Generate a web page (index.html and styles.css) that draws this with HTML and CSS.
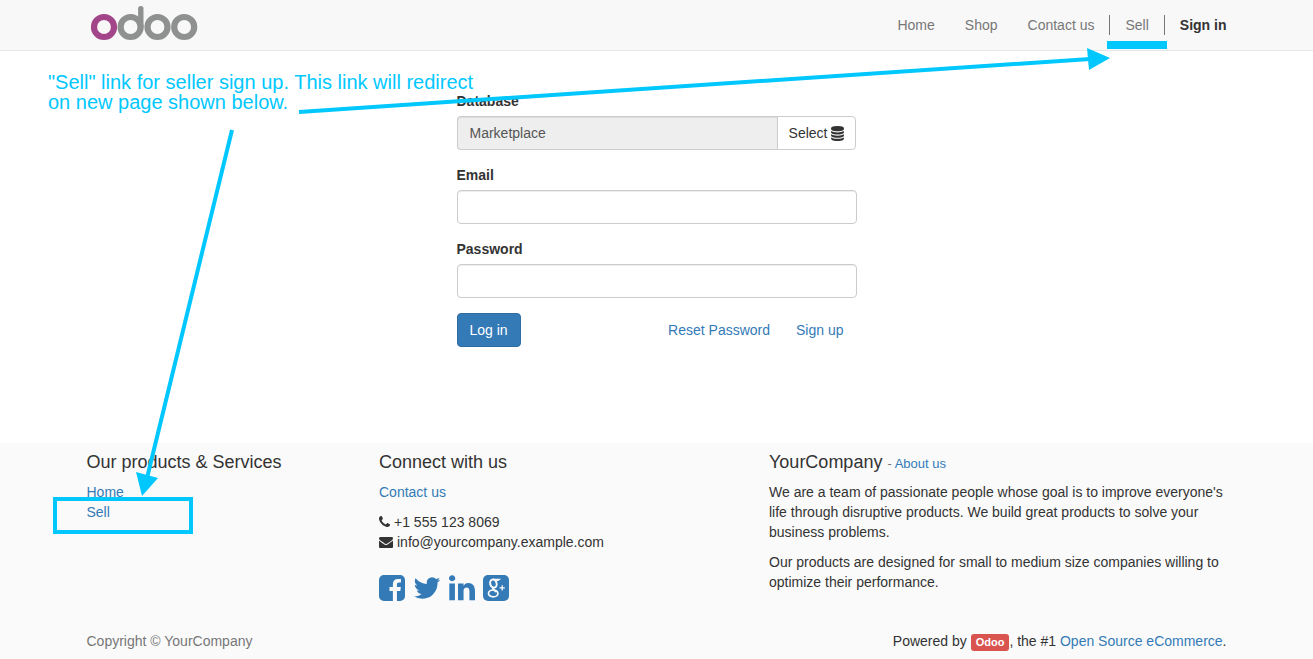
FILE: index.html
```html
<!DOCTYPE html>
<html lang="en">
<head>
<meta charset="utf-8">
<title>Sign in</title>
<link rel="stylesheet" href="styles.css">
</head>
<body>
<header class="navbar">
  <div class="container navbar-inner">
    <a class="brand" href="#" aria-label="odoo">
      <svg class="brand-logo" viewBox="87 0 115 50" fill="none" stroke="#8f9190" stroke-width="6.200">
        <circle cx="130.600" cy="27" r="10"/>
        <path d="M140.800 27V8.600" stroke-linecap="round" stroke-width="5.400"/>
        <circle cx="157.500" cy="27" r="10"/>
        <circle cx="184.200" cy="27" r="10"/>
        <circle cx="104" cy="27" r="10" stroke="#a24689"/>
      </svg>
    </a>
    <nav class="nav">
      <a href="#">Home</a>
      <a href="#">Shop</a>
      <a href="#">Contact us</a>
      <span class="divider"></span>
      <a href="#">Sell</a>
      <span class="divider"></span>
      <a class="sign-in" href="#">Sign in</a>
    </nav>
  </div>
</header>

<main class="main">
  <form class="login">
    <div class="field">
      <label for="db">Database</label>
      <div class="input-group">
        <input class="control" id="db" type="text" value="Marketplace" readonly>
        <button class="select-db" type="button">Select
          <svg class="icon-db" viewBox="128 0 1536 1792" fill="currentColor"><path d="M896 768q237 0 443-43t325-127v170q0 69-103 128t-280 93.500-385 34.500-385-34.500-280-93.500-103-128v-170q119 84 325 127t443 43zm0 768q237 0 443-43t325-127v170q0 69-103 128t-280 93.500-385 34.500-385-34.500-280-93.500-103-128v-170q119 84 325 127t443 43zm0-384q237 0 443-43t325-127v170q0 69-103 128t-280 93.500-385 34.500-385-34.500-280-93.500-103-128v-170q119 84 325 127t443 43zm0-1152q208 0 385 34.500t280 93.500 103 128v128q0 69-103 128t-280 93.500-385 34.500-385-34.500-280-93.500-103-128v-128q0-69 103-128t280-93.500 385-34.500z"/></svg>
        </button>
      </div>
    </div>
    <div class="field">
      <label for="email">Email</label>
      <input class="control" id="email" type="email">
    </div>
    <div class="field">
      <label for="password">Password</label>
      <input class="control" id="password" type="password">
    </div>
    <div class="actions">
      <button class="submit" type="submit">Log in</button>
      <div class="action-links">
        <a href="#">Reset Password</a>
        <a href="#">Sign up</a>
      </div>
    </div>
  </form>
</main>

<footer class="footer">
  <div class="container footer-cols">
    <section>
      <h4>Our products &amp; Services</h4>
      <ul>
        <li><a href="#">Home</a></li>
        <li><a href="#">Sell</a></li>
      </ul>
    </section>
    <section>
      <h4>Connect with us</h4>
      <ul>
        <li><a href="#">Contact us</a></li>
      </ul>
      <ul>
        <li class="contact">
          <svg class="icon-phone" viewBox="192 128 1408 1536" fill="currentColor"><path d="M1600 1240q0 27-10 70.500t-21 68.500q-21 50-122 106-94 51-186 51-27 0-53-3.500t-57.500-12.500-47-14.500-55.500-20.500-49-18q-98-35-175-83-127-79-264-216t-216-264q-48-77-83-175-3-9-18-49t-20.500-55.500-14.500-47-12.500-57.500-3.500-53q0-92 51-186 56-101 106-122 25-11 68.500-21t70.500-10q14 0 21 3 18 6 53 76 11 19 30 54t35 63.500 31 53.500q3 4 17.500 25t21.500 35.500 7 28.500q0 20-28.500 50t-62 55-62 53-28.500 46q0 9 5 22.500t8.500 20.500 14 24 11.500 19q76 137 174 235t235 174q2 1 19 11.500t24 14 20.500 8.500 22.500 5q18 0 46-28.500t53-62 55-62 50-28.500q14 0 28.500 7t35.500 21.500 25 17.500q25 15 53.500 31t63.500 35 54 30q70 35 76 53 3 7 3 21z"/></svg>
          <span>+1 555 123 8069</span>
        </li>
        <li class="contact">
          <svg class="icon-mail" viewBox="0 128 1792 1664" fill="currentColor"><path d="M1792 710v794q0 66-47 113t-113 47h-1472q-66 0-113-47t-47-113v-794q44 49 101 87 362 246 497 345 57 42 92.500 65.500t94.500 48 110 24.500h2q51 0 110-24.500t94.500-48 92.500-65.500q170-123 498-345 57-39 100-87zm0-294q0 79-49 151t-122 123q-376 261-468 325-10 7-42.500 31t-54 38.500-52 32.500-57.500 27-50 9h-2q-23 0-50-9t-57.500-27-52-32.500-54-38.500-42.500-31q-91-64-262-182.500t-205-142.500q-62-42-117-115.500t-55-136.500q0-78 41.500-130t118.500-52h1472q65 0 112.500 47t47.500 113z"/></svg>
          <span>info@yourcompany.example.com</span>
        </li>
      </ul>
      <div class="social">
        <a href="#" aria-label="Facebook"><svg class="icon-social" viewBox="128 128 1536 1536" fill="currentColor"><path d="M1376 128q119 0 203.500 84.500t84.500 203.500v960q0 119-84.500 203.500t-203.500 84.500h-188v-595h199l30-232h-229v-148q0-56 23.500-84t91.500-28l122-1v-207q-63-9-178-9-136 0-217.500 80t-81.500 226v171h-200v232h200v595h-532q-119 0-203.500-84.500t-84.500-203.500v-960q0-119 84.500-203.500t203.500-84.500h960z"/></svg></a>
        <a href="#" aria-label="Twitter"><svg class="icon-twitter" viewBox="64 128 1664 1536" fill="currentColor"><path d="M1684 408q-67 98-162 167 1 14 1 42 0 130-38 259.500t-115.500 248.500-184.500 210.500-258 146-323 54.500q-271 0-496-145 35 4 78 4 225 0 401-138-105-2-188-64.500t-114-159.500q33 5 61 5 43 0 85-11-112-23-185.500-111.500t-73.500-205.500v-4q68 38 146 41-66-44-105-115t-39-154q0-88 44-163 121 149 294.500 238.500t371.500 99.500q-8-38-8-74 0-134 94.500-228.500t228.500-94.500q140 0 236 102 109-21 205-78-37 115-142 178 93-10 186-50z"/></svg></a>
        <a href="#" aria-label="LinkedIn"><svg class="icon-social" viewBox="128 128 1536 1536" fill="currentColor"><path d="M477 625v991h-330v-991h330zm21-306q1 73-50.500 122t-135.500 49h-2q-82 0-132-49t-50-122q0-74 51.500-122.500t134.500-48.500 133 48.500 51 122.500zm1166 729v568h-329v-530q0-105-40.500-164.500t-126.500-59.500q-63 0-105.500 34.500t-63.500 85.500q-11 30-11 81v553h-329q2-399 2-647t-1-296l-1-48h329v144h-2q20-32 41-56t56.500-52 87-43.500 114.500-15.500q171 0 275 113.500t104 332.500z"/></svg></a>
        <a href="#" aria-label="Google Plus"><svg class="icon-social" viewBox="0 0 26 26"><rect width="26" height="26" rx="5" fill="currentColor"/><g fill="none" stroke="#fafafa"><ellipse cx="10.400" cy="8.600" rx="3.200" ry="4.100" stroke-width="2" transform="rotate(-16 10.400 8.600)"/><path d="M10 4.300H16.500L15 5.500H12.500" stroke-width="1.200"/><path d="M10.800 12.400q-1.600 1.100-.2 2.300l3 2.300" stroke-width="2"/><ellipse cx="10.200" cy="18.400" rx="4.700" ry="3.400" stroke-width="1.700"/><path d="M19.200 10.200v5.200M16.600 12.800h5.200" stroke-width="1.300"/></g></svg></a>
      </div>
    </section>
    <section>
      <h4>YourCompany <small>- <a href="#">About us</a></small></h4>
      <p>We are a team of passionate people whose goal is to improve everyone's life through disruptive products. We build great products to solve your business problems.</p>
      <p>Our products are designed for small to medium size companies willing to optimize their performance.</p>
    </section>
  </div>
  <div class="container footer-bottom">
    <span class="copyright">Copyright © YourCompany</span>
    <span>Powered by <a class="badge" href="#">Odoo</a>, the #1 <a href="#">Open Source eCommerce</a>.</span>
  </div>
</footer>

<div class="notes">
  <svg class="notes-shapes" viewBox="0 0 1313 659" fill="none" stroke="#00c8ff" stroke-width="4">
    <path d="M299 112L1090 59M232 130L147 478"/>
    <path d="M55 499H191V532H55Z"/>
    <path d="M1107 41h60v8h-60zM1087 48L1110 58L1089 70zM136 472L158 478L142 496z" fill="#00c8ff" stroke="none"/>
  </svg>
  <p class="notes-text">"Sell" link for seller sign up. This link will redirect<br>on new page shown below.</p>
</div>
</body>
</html>
```
FILE: styles.css
```css
* {
  box-sizing: border-box;
}

body {
  margin: 0;
  position: relative;
  display: flex;
  flex-direction: column;
  min-height: 100vh;
  background: #fff;
  color: #333;
  font-family: "Liberation Sans", Arial, sans-serif;
  font-size: 14px;
  line-height: 20px;
}

a {
  color: #337ab7;
  text-decoration: none;
}

svg {
  display: block;
}

.container {
  width: 100%;
  max-width: 1170px;
  margin: 0 auto;
  padding: 0 15px;
}

.navbar {
  background: #f8f8f8;
  border-bottom: 1px solid #e7e7e7;
}

.navbar-inner {
  display: flex;
  justify-content: space-between;
  padding-right: 0;
}

.brand-logo {
  width: 115px;
  height: 50px;
}

.nav {
  display: flex;
  align-items: center;
}

.nav a {
  padding: 15px;
  color: #777;
}

.nav .sign-in {
  color: #333;
  font-weight: bold;
}

.divider {
  width: 1px;
  height: 20px;
  background: #777;
}

.main {
  flex: 1;
  padding: 40px 15px 96px;
}

.login {
  max-width: 400px;
  margin: 0 auto;
}

.field {
  margin-bottom: 15px;
}

.field label {
  display: block;
  margin-bottom: 5px;
  font-weight: bold;
}

.control {
  display: block;
  width: 100%;
  height: 34px;
  padding: 6px 12px;
  border: 1px solid #ccc;
  border-radius: 4px;
  background: #fff;
  box-shadow: inset 0 1px 1px rgba(0, 0, 0, 0.075);
  color: #555;
  font: inherit;
}

.input-group {
  display: flex;
  padding-right: 1px;
}

.input-group .control {
  flex: 1;
  min-width: 0;
  border-right: 0;
  border-radius: 4px 0 0 4px;
  background: #eee;
}

.select-db {
  display: flex;
  align-items: center;
  gap: 3px;
  height: 34px;
  padding: 6px 11px;
  border: 1px solid #ccc;
  border-radius: 0 4px 4px 0;
  background: #fff;
  color: #333;
  font: inherit;
}

.icon-db {
  width: 13px;
  height: 15px;
}

.actions,
.action-links {
  display: flex;
  align-items: center;
  justify-content: space-between;
}

.action-links {
  gap: 26px;
  padding-right: 13px;
}

.submit {
  padding: 6px 12px;
  border: 1px solid #2e6da4;
  border-radius: 4px;
  background: #337ab7;
  color: #fff;
  font: inherit;
  line-height: 20px;
}

.footer {
  padding: 9px 0 8px;
  background: #fafafa;
}

.footer-cols {
  display: grid;
  grid-template-columns: 3fr 4fr 5fr;
  padding: 0;
}

.footer-cols section {
  padding: 0 15px;
}

.footer h4 {
  margin: 0 0 10px;
  font-size: 18px;
  font-weight: normal;
  line-height: 20px;
}

.footer small {
  color: #777;
  font-size: 13px;
  line-height: 1;
}

.footer ul {
  margin: 0 0 10px;
  padding: 0;
  list-style: none;
}

.footer p {
  margin: 0 0 10px;
}

.contact {
  display: flex;
  align-items: center;
  gap: 4px;
}

.icon-phone {
  width: 11px;
  height: 12px;
}

.icon-mail {
  width: 14px;
  height: 13px;
}

.social {
  display: flex;
  gap: 8px;
  padding-top: 13px;
}

.icon-social {
  width: 26px;
  height: 26px;
}

.icon-twitter {
  width: 28px;
  height: 26px;
}

.footer-bottom {
  display: flex;
  justify-content: space-between;
  padding-top: 29px;
}

.copyright {
  color: #777;
}

.badge {
  padding: 2px 5px 3px;
  border-radius: 3px;
  background: #d9534f;
  color: #fff;
  font-size: 11px;
  font-weight: bold;
}

/* Annotations drawn over the page */
.notes {
  position: absolute;
  top: 0;
  left: 0;
  color: #00c8ff;
  pointer-events: none;
}

.notes-shapes {
  width: 1313px;
  height: 659px;
}

.notes-text {
  position: absolute;
  top: 72px;
  left: 48px;
  margin: 0;
  font-size: 20px;
  line-height: 20px;
  white-space: nowrap;
}
```
